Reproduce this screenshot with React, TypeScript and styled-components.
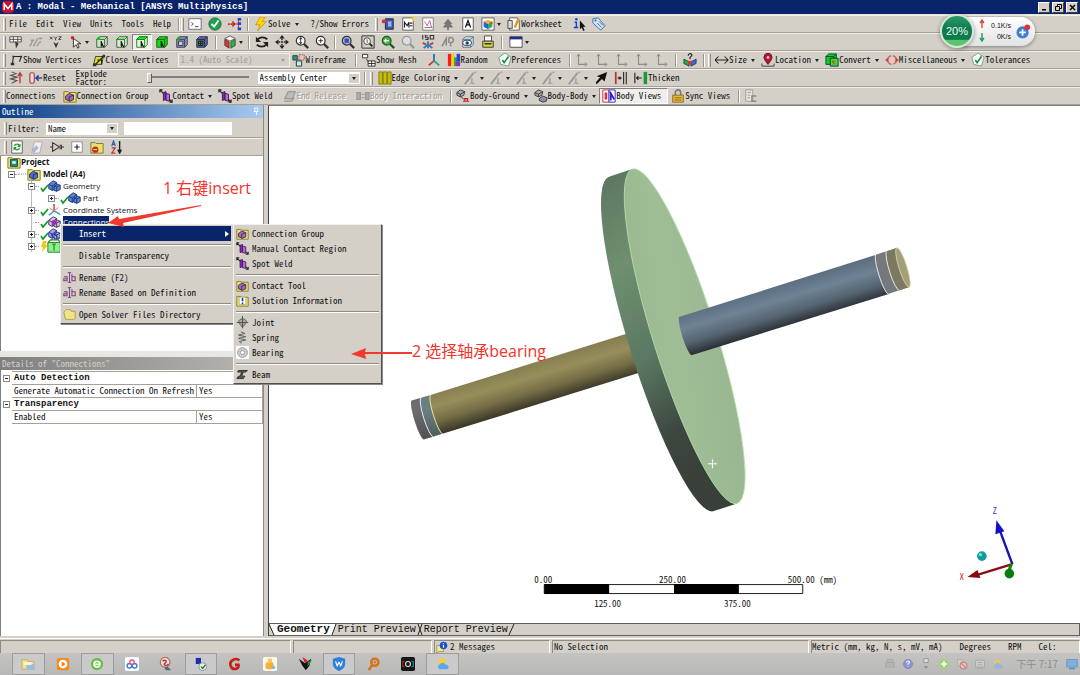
import React from "react";
import styled, { createGlobalStyle, css } from "styled-components";

const MONO = '"Noto Sans Mono CJK SC", "Liberation Mono", monospace';
const SANS = '"Open Sans", "Noto Sans", sans-serif';
const CJK = '"Open Sans", "Noto Sans CJK SC", sans-serif';
const FACE = "#d4d0c8";
const NAVY = "#0a246a";

const Global = createGlobalStyle`
  * { box-sizing: border-box; }
  body { margin: 0; background: ${FACE}; font: 9px/12px ${MONO}; color: #111; }
  button, input, select { font: inherit; color: inherit; margin: 0; border-radius: 0; }
`;

/* ---------- icons ---------- */

const Cube = ({ c, d, x = 2, y = 2 }: { c: string; d: string; x?: number; y?: number }) => (
  <g transform={`translate(${x} ${y})`} stroke={d} strokeWidth="1" strokeLinejoin="round">
    <path d="M0 3L3 0h9v9l-3 3H0z" fill={c} />
    <path d="M0 3h9v9M9 3l3-3" fill="none" />
  </g>
);
const Part = ({ c, d }: { c: string; d: string }) => (
  <g stroke={d} strokeWidth="1" strokeLinejoin="round">
    <path d="M2 6l5-4 4 2v6l-5 3-4-2z" fill={c} />
    <path d="M2 6l4 2v5M6 8l5-4" fill="none" />
    <path d="M8 8l4-2 3 1v5l-4 2-3-1z" fill={c} />
    <path d="M8 8l3 1v5M11 9l4-2" fill="none" />
  </g>
);
const Folder = () => <path d="M1 3h5l1 1h8v11H1z" fill="#ecdf6e" stroke="#7c7420" strokeWidth="1" />;
const Lens = ({ c = "#fff", s = "#333" }) => (
  <g>
    <path d="M10 10l5 5" stroke={s} strokeWidth="2.6" />
    <circle cx="6.5" cy="6.5" r="5" fill={c} stroke={s} strokeWidth="1.4" />
  </g>
);
const Tick = () => <path d="M5 8l2 3 5-7" fill="none" stroke="#17884a" strokeWidth="1.8" />;
const Page = ({ s = "#555" }) => <path d="M2 1h12v14H2z" fill="#fff" stroke={s} strokeWidth="1" />;

const ART: Record<string, React.ReactNode> = {
  ansys: <><rect width="16" height="16" rx="5" fill="#c8102e" /><path d="M3 12V4l5 6 5-6v8" fill="none" stroke="#fff" strokeWidth="2.2" /></>,
  cmd: <><rect x="1" y="2" width="14" height="12" fill="#fff" stroke="#667" /><path d="M4 6l2 2-2 2M8 11h4" stroke="#333" fill="none" /></>,
  ok: <><circle cx="8" cy="8" r="7" fill="#1fa04d" stroke="#0d6e33" /><path d="M4 8l3 3 5-7" stroke="#fff" strokeWidth="2.2" fill="none" /></>,
  link: <><path d="M0 8h2M3 8h2" stroke="#c22" strokeWidth="2" /><path d="M5 4l4 4-4 4z" fill="#c22" /><path d="M9 8h4M12 3v10" stroke="#c22" strokeWidth="1" /><path d="M11 1h4v3h-4zM11 6h4v3h-4zM11 12h4v3h-4z" fill="#24c" /></>,
  bolt: <path d="M7 0h6l-4 5h5L4 16l3-7H2z" fill="#ffd800" stroke="#c08a00" strokeWidth=".8" />,
  book: <><path d="M5 2h9v12H5z" fill="#3a55b8" stroke="#223" /><path d="M1 3h5v4H1z" fill="#c33" /><path d="M8 5h4v6H8z" fill="#9db2ee" /></>,
  note: <><Page /><path d="M4 12V6l3 4 2-4v6M10 7h3M10 10h3" stroke="#222" fill="none" strokeWidth="1.3" /><path d="M10 1l5-1v5z" fill="#f3d32b" /></>,
  chartpg: <><Page s="#777" /><path d="M4 5l3 5 3-6 2 8M4 12h9" stroke="#a4567a" fill="none" /></>,
  tree: <path d="M8 2l5 6h-2l3 4H9v3H7v-3H2l3-4H3z" fill="#777" />,
  letter: <><Page /><path d="M5 12l3-8 3 8M6 9h4" stroke="#111" fill="none" strokeWidth="1.4" /></>,
  rainbow: <><path d="M1 1h14v14H1z" fill="#fff" stroke="#555" /><path d="M3 5l5-2 5 2-5 3z" fill="#e8b81e" /><path d="M3 5v6l5 3V8z" fill="#2b5fe0" /><path d="M13 5v6l-5 3V8z" fill="#29b34a" /><path d="M9 7l4-2v3z" fill="#e33" /></>,
  sheet: <><path d="M3 1h9l2 3v11H3z" fill="#fff" stroke="#555" /><path d="M1 4h5v9H1z" fill="#d9d9d9" stroke="#444" /><path d="M13 2l-4 10" stroke="#d99a1c" strokeWidth="2.6" /></>,
  info: <><path d="M3 6h2v6M2 12h5" stroke="#14c" strokeWidth="1.6" fill="none" /><circle cx="5" cy="2.600" r="1.400" fill="#14c" /><path d="M9 4v10l2-2 2 4 1.500-1-2-4h3z" fill="#111" /></>,
  tag: <><path d="M1 2l6-1 8 9-5 5-9-8z" fill="#cfe3f5" stroke="#356a9a" /><circle cx="4" cy="4" r="1.2" fill="#356a9a" /><path d="M6 7l5 5M8 5l5 5" stroke="#356a9a" /></>,
  filter: <><path d="M1 2h13v6H1zM1 5h13M5 2v6M10 2v6" fill="#fff" stroke="#444" /><path d="M7 7l1 8 3-5z" fill="#333" /></>,
  bars: <path d="M1 13l3-6M5 13l5-9M9 13l3-5M2 6h4M11 4h4M12 8h2" stroke="#999" strokeWidth="1.600" />,
  xyz: <><path d="M1 2l3 3M4 2L1 5M6 2l1.500 2L9 2M7.500 4v2M11 2h3l-3 3h3" stroke="#333" fill="none" /><path d="M5 8l3 7 3-7-3 2z" fill="#333" /></>,
  pick: <><circle cx="4" cy="3" r="2" fill="#d22" /><path d="M5 4v10l3-3 2 4 1.600-1-2-4h4z" fill="#fff" stroke="#222" /></>,
  cubeV: <><Cube c="#d4e2cf" d="#285c28" /><circle cx="4" cy="4" r="2" fill="#1c1" /><path d="M7 7v6l2-1 1 2z" fill="#111" stroke="#111" /></>,
  cubeE: <><Cube c="#e4e6dd" d="#285c28" /><path d="M2 5h9" stroke="#0a0" strokeWidth="1.6" /><path d="M7 7v6l2-1 1 2z" fill="#111" stroke="#111" /></>,
  cubeF: <><Cube c="#e9f3e7" d="#0a7a0a" /><path d="M2 5l3-3h9l-3 3z" fill="#2e2" stroke="#0a7a0a" /><path d="M7 7v6l2-1 1 2z" fill="#111" stroke="#111" /></>,
  cubeB: <><Cube c="#1ed41e" d="#066006" /><path d="M7 7v6l2-1 1 2z" fill="#111" stroke="#111" /></>,
  cubeN: <><Cube c="#8d93b8" d="#2d3152" /><path d="M4 7h5v5H4z" fill="#c9cbe0" stroke="#333" /><circle cx="4" cy="4" r="2" fill="#2a2" /></>,
  cubeM: <><Cube c="#666c9c" d="#1b1f48" /><path d="M4 7h5v5H4zM6.500 7v5M4 9.500h5" fill="#2b2" stroke="#111" /></>,
  cubeR: <><path d="M8 1l6 3-6 3-6-3z" fill="#f4f4f4" stroke="#333" strokeWidth=".8" /><path d="M2 5v7l5 3V8z" fill="#d33" stroke="#333" strokeWidth=".8" /><path d="M14 5v7l-5 3V8z" fill="#2b3" stroke="#333" strokeWidth=".8" /></>,
  rotate: <><path d="M14 5C11 2 6 2 3 5M2 11c3 3 8 3 11 0" fill="none" stroke="#222" strokeWidth="2.200" /><path d="M1 2v6h6zM15 14V8H9z" fill="#222" /></>,
  pan: <><path d="M8 4v2M8 10v2M4 8h2M10 8h2M7 8h2" stroke="#222" strokeWidth="1.6" /><path d="M8 0l3 4H5zM8 16l3-4H5zM0 8l4-3v6zM16 8l-4-3v6z" fill="#222" /></>,
  zoom1: <><Lens /><path d="M6.500 3v7M5 5l1.500-2L8 5M5 8l1.500 2L8 8" stroke="#222" fill="none" /></>,
  zoom2: <><Lens /><path d="M6.500 4v5M4 6.500h5" stroke="#222" /></>,
  zoomFit: <><Lens c="#aab6e8" /><path d="M4 4h5v5H4z" fill="#3c4fae" /></>,
  zoomBox: <><path d="M1 1h14v14H1z" fill="none" stroke="#222" /><path d="M9 9l4 4" stroke="#222" strokeWidth="2" /><circle cx="7" cy="7" r="3.800" fill="#fff" stroke="#333" /><path d="M7 5v4" stroke="#444" /></>,
  zoomG: <><Lens c="#49b04a" s="#205c22" /><path d="M9 6.500H4M6 4.500l-2 2 2 2" stroke="#fff" fill="none" strokeWidth="1.4" /></>,
  zoomD: <Lens c="#ddd" s="#999" />,
  iso: <><path d="M2 0v5M5 5h3V2.500H5V0h3M10.500.500h4v4h-4z" stroke="#333" fill="none" strokeWidth="1.200" /><path d="M8 7v8M3 15l5-4 5 4" stroke="#1a7fbf" strokeWidth="2" fill="none" /><path d="M2 9l4 2M14 9l-4 2" stroke="#c33" strokeWidth="2" /></>,
  look: <path d="M1 13l5-9v8M9 3c6-1 7 5 2 6v4M9 3v6" stroke="#8a8a8a" strokeWidth="1.800" fill="none" />,
  eye: <><Cube c="#cfe0ec" d="#54708a" /><ellipse cx="7" cy="9" rx="5" ry="3" fill="#fff" stroke="#234" /><circle cx="7" cy="9" r="2" fill="#246" /></>,
  print: <><path d="M4 1h8v6H4z" fill="#fff" stroke="#444" /><path d="M2 7h12v7H2z" fill="#d8cf3c" stroke="#333" /><path d="M4 10h8" stroke="#333" strokeWidth="1.600" /></>,
  win: <><path d="M1 2h14v12H1z" fill="#fff" stroke="#444" /><path d="M1 2h14v3H1z" fill="#1b2f86" /></>,
  vert: <><path d="M4 12L5 4h9l-2 6" fill="none" stroke="#222" strokeWidth="1.200" /><path d="M2 11h4v3H2zM4 3h2v2H4zM13 3h2v2h-2z" fill="#333" /></>,
  closeV: <><path d="M4 4h9l-2 9H2z" fill="#e6dc2c" stroke="#333" /><path d="M3 14L13 4M6 8h5v5" stroke="#222" fill="none" strokeWidth="1.400" /><path d="M1 12h4v3H1zM12 2h3v3h-3z" fill="#333" /></>,
  wire: <><path d="M1 3h5v5H1z" fill="#16a085" stroke="#333" /><path d="M8 2h6v6H8z" fill="none" stroke="#b33" strokeDasharray="2 1" /><path d="M5 9h6v6H5z" fill="#b9f2f2" stroke="#222" /></>,
  mesh: <><path d="M.500 1.500h6v4h-6z" fill="#fff" stroke="#222" /><path d="M5 7l2 3M7 9h8v6H7zM7 12h8M11 9v6" fill="#fff" stroke="#222" /></>,
  triad: <g fill="none" strokeWidth="2"><path d="M8 9V1" stroke="#17a" /><path d="M8 9l-6 5" stroke="#d33" /><path d="M8 9l6 5" stroke="#2a8" /></g>,
  random: <><path d="M1 1h4v14H1z" fill="#e22" /><path d="M5 1h3v14H5z" fill="#f6d000" /><path d="M8 5h4v10H8z" fill="#22b14c" /><path d="M11 1h4v9h-4z" fill="#2244d8" /><path d="M10 10h5v5h-5z" fill="#8e2fc0" /></>,
  pref: <><path d="M8 0l7 5-3 10-9-2-2-8z" fill="#f4fbf6" stroke="#6d9a80" /><Tick /></>,
  axis: <><path d="M4 2v11h9" fill="none" stroke="#8d8d8d" strokeWidth="1.300" /><path d="M2 4l2-3 2 3M11 11l3 2-3 2" fill="none" stroke="#8d8d8d" /></>,
  help3d: <><path d="M1 7l6 3v5l-6-3z" fill="#1fae4c" stroke="#222" strokeWidth=".8" /><path d="M15 7l-6 3v5l6-3z" fill="#2b6fe0" stroke="#222" strokeWidth=".8" /><path d="M6 3c0-3 5-3 4 0L8 5v2" stroke="#222" strokeWidth="1.300" fill="none" /><path d="M6 9h4v4H6z" fill="#d33" /></>,
  size: <path d="M0 8h15M4 4L0 8l4 4M11 4l4 4-4 4" fill="none" stroke="#222" strokeWidth="1.200" />,
  loc: <><path d="M8 13C4 8 3 6 3.500 4a4.600 4.600 0 019 0C13 6 12 8 8 13z" fill="#b01838" stroke="#640a1e" /><circle cx="8" cy="5" r="1.600" fill="#f4b5c2" /><path d="M1 12v3h14v-3" fill="none" stroke="#333" /></>,
  convert: <><Cube c="#18c818" d="#044" x={1} y={1} /><path d="M6 6h9v9H6z" fill="#3be03b" stroke="#033" /><path d="M9 8v5M12 9l-3 2 3 2" stroke="#b52" strokeWidth="1.300" fill="none" /></>,
  misc: <><circle cx="8" cy="8" r="5" fill="none" stroke="#d66" strokeWidth="1.600" strokeDasharray="6 2" /><path d="M0 8l4-3v6zM16 8l-4-3v6z" fill="#c44" /></>,
  spring: <><path d="M3 1l5 2-6 2 7 2-7 2 7 2-6 3" fill="none" stroke="#555" strokeWidth="1.200" /><path d="M12.500 14V3M10 6l2.500-4L15 6" stroke="#b33" fill="none" strokeWidth="1.500" /></>,
  springG: <path d="M6 1l5 2-8 2 9 2-9 2 9 2-8 2 3 2" fill="none" stroke="#555" strokeWidth="1.100" />,
  reset: <><rect x="1" y="2" width="5" height="12" rx="2" fill="#f0dcdc" stroke="#a44" strokeWidth="1.400" /><path d="M15 8H8M11 5L8 8l3 3" stroke="#224a9a" fill="none" strokeWidth="1.800" /></>,
  yellow: <path d="M1 1h4v14H1zM6 1h4v14H6zM11 1h4v14h-4z" fill="#c9be00" stroke="#6d6800" strokeWidth=".8" />,
  edge: <><path d="M1 15L11 2" stroke="#999" strokeWidth="2" /><path d="M9 8v6M7 14h5M12 2l2-1" stroke="#999" strokeWidth="1.400" /></>,
  arrowB: <path d="M15 1l-3 11-3-3-6 6-1-2 5-6-4-1z" fill="#111" />,
  hbar: <><path d="M2 1v14" stroke="#b33" strokeWidth="2" /><path d="M11 1v14M14 1v14" stroke="#222" strokeWidth="1.200" /><path d="M4 8h5" stroke="#b33" strokeWidth="1.200" /><circle cx="6.500" cy="8" r="1.800" fill="#333" /></>,
  thick: <><path d="M1 2v12M3 8h6M5 6L3 8l2 2" stroke="#222" fill="none" strokeWidth="1.300" /><path d="M11 1h4v14h-4z" fill="#189a3c" /></>,
  group: <><Folder /><path d="M3 8l4-3 5 2v5l-4 2-5-2z" fill="#9d6aba" stroke="#3a2550" /><path d="M7 9l5-2M7 9v5" stroke="#3a2550" /></>,
  contact: <><path d="M5 4l3-1v9l-3 1z" fill="#7c2fa8" stroke="#41125e" /><path d="M8 5l4 1v8l-4-1z" fill="#b368d6" stroke="#41125e" /><path d="M1 1l4 4M1 4V1h3M15 15l-3-3M15 12v3h-3" stroke="#222" fill="none" strokeWidth="1.300" /></>,
  release: <path d="M2 11l4-8h8l-3 8zM1 14h9l3-4" fill="#bbb" stroke="#999" strokeWidth="1.300" />,
  inter: <path d="M1 4h4v8H1zM11 4h4v8h-4zM6 6h4M6 10h4" fill="#aaa" stroke="#999" strokeWidth="1.200" />,
  ground: <><path d="M1 4l4-3 5 2-1 4-4 2-4-2z" fill="#a9a9b4" stroke="#333" /><path d="M1 4l4 2 5-3M5 6v3" stroke="#333" fill="none" /><path d="M6 9l3 3" stroke="#222" /><path d="M8 14h7M9 11h5M10 11v3M13 11v3" stroke="#b22" strokeWidth="1.300" /></>,
  bodies: <><path d="M1 4l4-3 5 2-1 4-4 2-4-2z" fill="#a9a9b4" stroke="#333" /><path d="M1 4l4 2 5-3M5 6v3" stroke="#333" fill="none" /><path d="M6 11l4-3 5 2-1 4-4 1-4-2z" fill="#8b8fb0" stroke="#333" /></>,
  views: <><path d="M1 1h7v14H1z" fill="#fff" stroke="#c22" /><path d="M8 1h7v14H8z" fill="#fff" stroke="#22c" /><path d="M3 4h3v8H3z" fill="#d33" /><path d="M9 3l5 9M10 13V6" stroke="#22c" strokeWidth="2" /></>,
  lock: <><path d="M5 7V4a3 3 0 016 0v3" fill="none" stroke="#777" strokeWidth="1.800" /><rect x="2" y="7" width="12" height="8" fill="#e9b93a" stroke="#8a6410" /><path d="M4 10h8M4 12.500h8" stroke="#8a6410" /></>,
  copyC: <><path d="M2 1h8v13H2zM4 4h4M4 7h3M4 10h3" fill="#e6e4df" stroke="#999" /><path d="M14 8H9v6h5" stroke="#888" fill="none" strokeWidth="1.600" /></>,
  refresh: <><Page /><path d="M5 7c1-3 5-3 6 0M11 9c-1 3-5 3-6 0" stroke="#1a9a2c" strokeWidth="1.600" fill="none" /><path d="M12 4v4H8zM4 12V8h4z" fill="#1a9a2c" /></>,
  page2: <><path d="M2 15l3-13h9l-3 13z" fill="#eef0f4" stroke="#aaa" /><path d="M2 12l5-6 3 3-6 6z" fill="#a9b6cc" /></>,
  gate: <path d="M0 8h3M3 3v10l8-5zM11 8h5M11 6h2v4h-2" fill="none" stroke="#333" strokeWidth="1.200" />,
  plus: <><path d="M2 2h12v12H2z" fill="#fff" stroke="#888" /><path d="M8 5v6M5 8h6" stroke="#222" strokeWidth="1.300" /></>,
  folderR: <><Folder /><circle cx="6" cy="11" r="3.600" fill="#c4311c" /><path d="M4 11h4" stroke="#fff" /></>,
  az: <><path d="M2 7l2-6 2 6M3 5h3" fill="none" stroke="#235fb0" strokeWidth="1.300" /><path d="M2 9h4l-4 6h4" fill="none" stroke="#b33" strokeWidth="1.300" /><path d="M11 1v13M9 11l2 4 2-4" fill="none" stroke="#222" strokeWidth="1.600" /></>,
  project: <><Folder /><path d="M4 5h8v8H4z" fill="#1d8f7c" stroke="#0b4a40" /><path d="M6 7h4v3H6z" fill="#e8f6f3" /></>,
  model: <><Folder /><path d="M3 8l4-3 5 2v5l-4 2-5-2z" fill="#4b74c9" stroke="#152a5e" /><path d="M7 9l5-2M7 9v5" stroke="#152a5e" /></>,
  part: <Part c="#5a86d8" d="#14326e" />,
  csys: <g strokeWidth="1.600"><path d="M8 9V1" stroke="#d33" /><path d="M8 9l-6 5" stroke="#39c" /><path d="M8 9l7 4" stroke="#39c" /><path d="M3 6l5 3 5-4" stroke="#d66" fill="none" strokeWidth="1" /></g>,
  conn: <><Part c="#d6c4e4" d="#3a2550" /><path d="M6 6h5v5H6z" fill="#a02bb8" /></>,
  meshT: <><Part c="#a5a8ec" d="#22288a" /><path d="M4 7l4 5M9 9l5 4M4 11l6-5" stroke="#22288a" strokeWidth=".8" /></>,
  env: <><path d="M1 4h14v11H1z" fill="#8df08d" stroke="#1a7a1a" /><path d="M8 6v7M6 6h4M1 4l3-3h9l2 3" stroke="#1a7a1a" fill="none" strokeWidth="1.200" /></>,
  ab: <><path d="M1 7h4v5H1V9.500h4M11 4v8h4V7h-4" fill="none" stroke="#7b3f7f" strokeWidth="1.300" /><path d="M8 2v12M6 2h4M6 14h4" stroke="#7b3f7f" strokeWidth="1.200" /></>,
  folder: <path d="M1 5l3-3h5l1 2h5v9l-2 1H3z" fill="#f0e388" stroke="#a3983a" />,
  solinfo: <><Folder /><path d="M4 4h8v9H4z" fill="#fff" stroke="#884" strokeWidth=".6" /><path d="M8 5v4M8 10.500v2" stroke="#1330a8" strokeWidth="2" /></>,
  joint: <><path d="M3 8c0-6 10-6 10 0l-5 6z" fill="#aaa79f" stroke="#555" /><path d="M8 0v15M1 8h14" stroke="#555" strokeWidth="1.300" /></>,
  bearing: <><path d="M0 0h16v16H0z" fill="#fff" /><circle cx="8" cy="8" r="6" fill="#ddd" stroke="#888" /><circle cx="8" cy="8" r="2.600" fill="#fff" stroke="#888" /><circle cx="8" cy="8" r="4.400" fill="none" stroke="#999" strokeDasharray="1.500 2" /></>,
  beam: <path d="M3 3h11l-2 2H9l-2 5h4l-2 3H1l2-3h2l2-5H2z" fill="#555" stroke="#222" />,
  msg: <><path d="M1 6h9v8H4l-3 2z" fill="#f2e6a0" stroke="#998b3a" /><circle cx="10" cy="6" r="5" fill="#1c4fd0" /><path d="M10 5v4M10 2.600v1" stroke="#fff" strokeWidth="1.600" /></>,
  explorer: <><path d="M1 3h6l1 2h7v9H1z" fill="#f3dd8b" stroke="#bfa24a" strokeWidth=".8" /><path d="M6 8h9v6H6z" fill="#8cc4e8" /><path d="M3 6h9v3H3z" fill="#fff7d6" /></>,
  play: <><rect x="1" y="1" width="14" height="14" rx="2" fill="#f08c1c" /><circle cx="8" cy="8" r="5" fill="#fff" /><path d="M6.500 5v6l4.500-3z" fill="#e87a08" /></>,
  ie: <><circle cx="8" cy="8" r="7" fill="#5fc13c" /><path d="M4.500 8.500h7C11.500 4 5 4 4.500 8c0 4 5 4.500 6.800 2" fill="none" stroke="#fff" strokeWidth="1.900" /></>,
  cloud: <><rect x="0" y="0" width="16" height="16" rx="2" fill="#fff" /><g fill="none" strokeWidth="1.600"><circle cx="5" cy="10" r="2.600" stroke="#2f7fe6" /><circle cx="11" cy="10" r="2.600" stroke="#2f7fe6" /><circle cx="8" cy="6" r="2.600" stroke="#e2567a" /></g></>,
  swirl: <><circle cx="7" cy="6" r="5.500" fill="#e9e4e2" stroke="#c2675c" strokeWidth="1.400" /><path d="M4 5c3-3 6 0 3 2s1 4 4 1" fill="none" stroke="#b23a30" strokeWidth="1.600" /><path d="M6 12l4-1 4 4H8z" fill="#566a72" /></>,
  doc: <><path d="M2 1h6v7H2z" fill="#1c2fae" /><circle cx="10" cy="11" r="4.500" fill="#e4ecdc" stroke="#7f927a" /><path d="M8 11l2 2 3-4" fill="none" stroke="#256" strokeWidth="1.300" /></>,
  gred: <path d="M13 4C9 0 1 4 3 10s10 4 9-1H8" fill="none" stroke="#c81e14" strokeWidth="3" />,
  gift: <><rect x="0" y="0" width="16" height="16" rx="2" fill="#fdf8ea" /><rect x="3" y="6" width="9" height="8" rx="2" fill="#f4b038" /><circle cx="8" cy="4" r="2.500" fill="#f7c65c" /><circle cx="12" cy="12" r="2" fill="#6cbcf0" /></>,
  bird: <><path d="M1 2l7 5 7-5-2 8-4 5-4-5z" fill="#111" /><path d="M5 0l6 4-3 3z" fill="#e01818" /><path d="M11 6l5-3-5 8z" fill="#1a9a3a" /></>,
  shield: <><path d="M8 0l7 2v6c0 4-4 7-7 8-3-1-7-4-7-8V2z" fill="#2f7ddc" /><path d="M4 5l2 5 2-4 2 4 2-5" fill="none" stroke="#fff" strokeWidth="1.400" /></>,
  key: <><circle cx="9" cy="6" r="4" fill="none" stroke="#d8741a" strokeWidth="3" /><path d="M6 9l-4 6" stroke="#d8741a" strokeWidth="3" /><circle cx="9" cy="6" r="1.300" fill="#d8741a" /></>,
  cam: <><rect x="0" y="0" width="16" height="16" rx="2" fill="#151515" /><circle cx="8" cy="8" r="2.800" fill="none" stroke="#ddd" strokeWidth="1.300" /><path d="M4 5H2v6h2" stroke="#d33" fill="none" /><path d="M12 5h2v6h-2" stroke="#1bb" fill="none" /></>,
  weather: <><circle cx="7" cy="6" r="4.500" fill="#f7cf3a" /><path d="M4 14a3 3 0 010-5.500 4 4 0 017 0 3 3 0 012 5.500z" fill="#5aa9ee" /></>,
  tPrint: <path d="M4 2h8v4H4zM2 6h12v6H2z" fill="#b4b4b4" stroke="#a6a6a6" />,
  tHelp: <><circle cx="8" cy="8" r="6" fill="#8f95cf" stroke="#777cb8" /><path d="M6 6c0-3 5-2 4 0L8 8v1M8 11v1" stroke="#eef" strokeWidth="1.500" fill="none" /></>,
  tDots: <><path d="M5 1h6v5H5z" fill="#ddd" stroke="#888" /><path d="M5 11h6l-3 3z" fill="#888" /></>,
  tGreen: <><circle cx="8" cy="8" r="7" fill="#a9cf7c" /><path d="M8 4v8M4 8h8" stroke="#fff" strokeWidth="2" /></>,
  tNo: <><path d="M2 2h7v9H2z" fill="#ccc" stroke="#aaa" /><circle cx="10" cy="10" r="4.500" fill="#e6c4c4" stroke="#c98686" strokeWidth="1.500" /><path d="M7 7l6 6" stroke="#c98686" strokeWidth="1.500" /></>,
  tNet: <path d="M2 3h12v9H2zM5 6h6M5 9h6M4 14h8" fill="#ccc" stroke="#a2a2a2" />,
  tSun: <g opacity=".55"><circle cx="7" cy="6" r="4.500" fill="#f7cf3a" /><path d="M4 14a3 3 0 010-5.500 4 4 0 017 0 3 3 0 012 5.500z" fill="#7ab4e6" /></g>,
  tDesk: <><path d="M1 2h14v10H1z" fill="#7fb0dc" stroke="#5f8fbc" /><path d="M4 14h8" stroke="#5f8fbc" strokeWidth="2" /></>,
  pin: <path d="M4 2h7M5 2v6h5V2M3 8h9M8 8v6" fill="none" stroke="#fff" strokeWidth="1.600" />,
};

const Svg = styled.svg<{ $s: number }>`
  width: ${(p) => p.$s}px;
  height: ${(p) => p.$s}px;
  flex: none;
  display: block;
`;
const Icon = ({ n, s = 14 }: { n: string; s?: number }) => (
  <Svg $s={s} viewBox="0 0 16 16" aria-hidden="true">{ART[n]}</Svg>
);

/* ---------- title bar and toolbars ---------- */

const PageBox = styled.div`
  height: 100vh;
  min-height: 500px;
  display: flex;
  flex-direction: column;
  overflow: hidden;
  position: relative;
`;
const TitleBar = styled.header`
  height: 15px;
  flex: none;
  display: flex;
  align-items: center;
  gap: 2px;
  padding: 0 2px;
  background: ${NAVY};
  border-bottom: 1px solid #e6e3dd;
  color: #fff;
`;
const Title = styled.h1`
  margin: 0;
  flex: 1;
  font: bold 9px/13px "Liberation Mono", monospace;
  white-space: nowrap;
`;
const WinButton = styled.button`
  width: 12px;
  height: 11px;
  padding: 0;
  display: grid;
  place-items: center;
  background: ${FACE};
  border: 1px solid;
  border-color: #fff #404040 #404040 #fff;
`;
const Bar = styled.div`
  height: 18px;
  flex: none;
  display: flex;
  align-items: center;
  padding-left: 3px;
  white-space: nowrap;
  border-top: 1px solid #f2f0ec;
  border-bottom: 1px solid #a5a199;
`;
const Grip = styled.span<{ $l?: number; $r?: number }>`
  width: 3px;
  height: 13px;
  flex: none;
  margin-left: ${(p) => p.$l ?? 0}px;
  margin-right: ${(p) => p.$r ?? 3}px;
  border-left: 1px solid #fff;
  border-right: 1px solid #8d8a83;
`;
const Sep = styled.span<{ $m?: number }>`
  width: 2px;
  height: 13px;
  flex: none;
  margin: 0 ${(p) => p.$m ?? 2}px;
  border-left: 1px solid #9a968e;
  border-right: 1px solid #fff;
`;
const ToolButton = styled.button<{ $label: boolean; $menu: boolean; $on: boolean; $off: boolean }>`
  height: 16px;
  flex: none;
  display: flex;
  align-items: center;
  padding: 0 ${(p) => (p.$menu ? 2 : p.$label ? 6 : 2)}px 0 2px;
  border: 1px solid transparent;
  background: none;
  white-space: nowrap;
  ${(p) => p.$on && css`
    background: #efeeeb;
    border-color: #808080 #fff #fff #808080;
  `}
  ${(p) => p.$off && css`
    color: #a29f98;
    text-shadow: 1px 1px #fff;
  `}
`;
const Caret = styled.span<{ $gap: number }>`
  margin-left: ${(p) => p.$gap}px;
  border: 2px solid transparent;
  border-top: 3px solid #222;
  border-bottom: 0;
`;
type ToolProps = { i?: string; t?: string; menu?: boolean; on?: boolean; off?: boolean };
const Tool = ({ i, t, menu, on, off }: ToolProps) => (
  <ToolButton type="button" aria-label={t ?? i} disabled={off} $label={!!t} $menu={!!menu} $on={!!on} $off={!!off}>
    {i && <Icon n={i} />}
    {t}
    {menu && <Caret $gap={t ? 4 : 2} />}
  </ToolButton>
);
const Tools = ({ list }: { list: string[] }) => <>{list.map((n, k) => <Tool key={k} i={n} on={n === "cubeF"} />)}</>;

const MenuBar = styled.nav`
  display: flex;
  margin-right: 1px;
`;
const MenuTop = styled.button`
  padding: 0 5px 0 4px;
  border: 0;
  background: none;
`;
const SelectBox = styled.label<{ $w: number; $off?: boolean; $l?: number }>`
  width: ${(p) => p.$w}px;
  height: 12px;
  flex: none;
  margin-left: ${(p) => p.$l ?? 0}px;
  display: flex;
  align-items: center;
  position: relative;
  background: ${(p) => (p.$off ? FACE : "#fff")};
  outline: ${(p) => (p.$off ? "1px solid #f2f0ec" : "none")};
  color: ${(p) => (p.$off ? "#a29f98" : "#111")};
  select {
    appearance: none;
    width: 100%;
    height: 12px;
    padding: 0 0 0 2px;
    border: 0;
    background: none;
    opacity: 1;
  }
  &::after {
    content: "";
    position: absolute;
    right: 4px;
    border: 2px solid transparent;
    border-top: 3px solid ${(p) => (p.$off ? "#a29f98" : "#222")};
    border-bottom: 0;
    box-shadow: 0 0 0 3px ${(p) => (p.$off ? "transparent" : FACE)};
    background: ${(p) => (p.$off ? "none" : FACE)};
  }
`;
const Choice = ({ label, value, w, off, l }: { label: string; value: string; w: number; off?: boolean; l?: number }) => (
  <SelectBox $w={w} $off={off} $l={l}>
    <select aria-label={label} disabled={off} defaultValue={value}><option>{value}</option></select>
  </SelectBox>
);
const Explode = styled.label`
  width: 40px;
  margin-left: 3px;
  line-height: 8px;
  white-space: normal;
`;
const Slider = styled.input`
  appearance: none;
  width: 102px;
  height: 12px;
  margin: 0 9px 0 31px;
  background: linear-gradient(#808080, #808080) 0 4px / 100% 2px no-repeat;
  &::-webkit-slider-thumb {
    appearance: none;
    width: 5px;
    height: 10px;
    background: ${FACE};
    border: 1px solid;
    border-color: #fff #606060 #606060 #fff;
  }
`;
const Caption = styled.span<{ $l?: number }>`
  padding: 0 4px 0 ${(p) => p.$l ?? 2}px;
`;

/* ---------- network speed badge ---------- */

const Speed = styled.aside`
  position: absolute;
  top: 14px;
  right: 45px;
  width: 95px;
  height: 34px;
  display: flex;
  align-items: center;
`;
const Percent = styled.div`
  width: 34px;
  height: 34px;
  z-index: 1;
  display: grid;
  place-items: center;
  border-radius: 50%;
  border: 2px solid #cfe6d8;
  background: linear-gradient(#2b9a6a 0, #0f7a4c 45%, #0f7a4c 78%, #5cc46a 80%);
  box-shadow: 0 1px 4px #0006;
  color: #e9fff2;
  font: 11px/14px "Liberation Sans", sans-serif;
`;
const Rates = styled.div`
  flex: 1;
  height: 29px;
  margin-left: -14px;
  padding: 0 4px 0 18px;
  display: flex;
  align-items: center;
  justify-content: space-between;
  border-radius: 0 15px 15px 0;
  background: linear-gradient(#fff, #e2e2e4);
  box-shadow: 0 1px 4px #0006;
  font: 7px/11px "Liberation Sans", sans-serif;
  div { text-align: right; }
`;
const RateArrows = styled.svg`
  width: 8px;
  height: 24px;
`;

/* ---------- left panel ---------- */

const Work = styled.main`
  flex: 1;
  min-height: 0;
  display: flex;
  position: relative;
  padding-bottom: 2px;
  border-bottom: 1px solid #fff;
`;
const Side = styled.section`
  width: 264px;
  flex: none;
  display: flex;
  flex-direction: column;
  border-right: 1px solid #8d8a83;
  margin-right: 4px;
`;
const PaneTitle = styled.h2<{ $dim?: boolean }>`
  margin: 0;
  height: 13px;
  flex: none;
  display: flex;
  justify-content: space-between;
  align-items: center;
  padding: 0 2px;
  font: 9px/13px ${MONO};
  color: ${(p) => (p.$dim ? "#d4d0c8" : "#fff")};
  background: ${(p) => (p.$dim ? "linear-gradient(90deg,#808080,#b9b6b0)" : "linear-gradient(90deg,#0d3f86,#a6caf0)")};
`;
const FilterRow = styled.div`
  height: 20px;
  flex: none;
  display: flex;
  align-items: center;
  padding: 2px 0 0 4px;
  border-bottom: 1px solid #a5a199;
`;
const FilterLabel = styled.span`
  width: 38px;
  margin-left: 1px;
`;
const FilterInput = styled.input`
  width: 108px;
  height: 13px;
  margin-left: 6px;
  padding: 0 2px;
  border: 0;
  background: #fff;
`;
const TreeTools = styled(Bar)`
  padding-left: 4px;
`;
const Tree = styled.ul`
  margin: 0;
  padding: 0;
  height: 195px;
  flex: none;
  list-style: none;
  background: #fff;
  border-left: 1px solid #808080;
  font: 8px/12px ${SANS};
`;
const TreeRow = styled.li<{ $depth: number }>`
  height: 12px;
  display: flex;
  align-items: center;
  padding-left: ${(p) => (p.$depth ? p.$depth * 20 - 13 : 6)}px;
  background: ${(p) => (p.$depth > 1 ? "linear-gradient(#bbb,#bbb) 30px 0 / 1px 100% no-repeat" : "none")};
`;
const Expander = styled.span<{ $empty?: boolean }>`
  width: 7px;
  height: 7px;
  flex: none;
  background: ${(p) => (p.$empty ? "none" : "#fff")};
  border: ${(p) => (p.$empty ? "0" : "1px solid #888")};
`;
const Stem = styled.span`
  width: 4px;
  flex: none;
  border-top: 1px dotted #999;
`;
const Mark = styled.svg`
  width: 24px;
  height: 14px;
  flex: none;
`;
const NodeName = styled.span<{ $bold?: boolean; $sel?: boolean }>`
  font-weight: ${(p) => (p.$bold ? 700 : 400)};
  background: ${(p) => (p.$sel ? NAVY : "none")};
  color: ${(p) => (p.$sel ? "#fff" : "#111")};
`;
type Node = { d: number; i: string; t: string; x?: string; m?: string; bold?: boolean; sel?: boolean };
const NODES: Node[] = [
  { d: 1, i: "model", t: "Model (A4)", x: "-", bold: true },
  { d: 2, i: "part", t: "Geometry", x: "-", m: "#1a9a2c" },
  { d: 3, i: "part", t: "Part", x: "+", m: "#1a9a2c" },
  { d: 2, i: "csys", t: "Coordinate Systems", x: "+", m: "#1a9a2c" },
  { d: 2, i: "conn", t: "Connections", m: "#1a9a2c", sel: true },
  { d: 2, i: "meshT", t: "", x: "+", m: "#1a9a2c" },
  { d: 2, i: "env", t: "", x: "+", m: "bolt" },
];

const DetailsBox = styled.div`
  flex: 1;
  padding-top: 1px;
  background: #fff;
  border-left: 1px solid #808080;
`;
const Splitter = styled.div`
  height: 6px;
  flex: none;
  background: #e9e7e2;
`;
const DetailsTable = styled.table`
  width: 100%;
  border-collapse: collapse;
  table-layout: fixed;
  td, th {
    height: 13px;
    padding: 0 0 0 2px;
    border: 1px solid #a5a199;
    line-height: 12px;
    text-align: left;
    white-space: nowrap;
    font-weight: 400;
  }
  td:first-child { border-color: transparent; padding: 0 1px; }
  th[colspan] { font: bold 9px/12px "Liberation Mono", monospace; }
`;
const ColToggle = styled.col`
  width: 10px;
`;
const ColValue = styled.col`
  width: 66px;
`;

/* ---------- viewport ---------- */

const Stage = styled.section`
  flex: 1;
  min-width: 0;
  display: flex;
  flex-direction: column;
  border-left: 1px solid #404040;
  border-top: 1px solid #808080;
`;
const Canvas = styled.svg`
  flex: 1;
  min-height: 0;
  width: 100%;
  background: #fff;
  display: block;
`;
const ViewTabs = styled.div`
  height: 13px;
  flex: none;
  display: flex;
  border: 1px solid #606060;
  border-left: 0;
  font: 10px/12px "Liberation Mono", monospace;
`;
const ViewTab = styled.button<{ $on?: boolean }>`
  padding: 0;
  border: 0;
  background: ${(p) => (p.$on ? "#fff" : "none")};
  font-weight: ${(p) => (p.$on ? 700 : 400)};
  font-size: ${(p) => (p.$on ? 11 : 10)}px;
  line-height: 11px;
`;
const Slash = styled.svg`
  width: 8px;
  height: 11px;
  flex: none;
`;

/* ---------- context menus ---------- */

const Popup = styled.div<{ $x: number; $y: number; $w: number }>`
  position: absolute;
  left: ${(p) => p.$x}px;
  top: ${(p) => p.$y}px;
  width: ${(p) => p.$w}px;
  padding: 1px 2px;
  background: ${FACE};
  border: 1px solid;
  border-color: #f2f0ec #505050 #505050 #f2f0ec;
  box-shadow: 1px 1px #888;
`;
const PopItem = styled.button<{ $on?: boolean }>`
  width: 100%;
  height: 15px;
  display: flex;
  align-items: center;
  gap: 3px;
  padding: 0 2px 0 0;
  border: 0;
  white-space: nowrap;
  background: ${(p) => (p.$on ? NAVY : "none")};
  color: ${(p) => (p.$on ? "#fff" : "#111")};
`;
const PopIcon = styled.span`
  width: 13px;
  flex: none;
`;
const PopRule = styled.hr`
  height: 2px;
  margin: 3px 0 2px;
  border: 0;
  border-top: 1px solid #8d8a83;
  border-bottom: 1px solid #fff;
`;
const SubArrow = styled.span`
  margin-left: auto;
  border: 3px solid transparent;
  border-left: 4px solid #fff;
  border-right: 0;
`;
const Popups = () => (
  <>
    <Popup role="menu" $x={60} $y={119} $w={174}>
      <PopItem $on><PopIcon />Insert<SubArrow /></PopItem>
      <PopRule />
      <PopItem><PopIcon />Disable Transparency</PopItem>
      <PopRule />
      <PopItem><PopIcon><Icon n="ab" s={13} /></PopIcon>Rename (F2)</PopItem>
      <PopItem><PopIcon><Icon n="ab" s={13} /></PopIcon>Rename Based on Definition</PopItem>
      <PopRule />
      <PopItem><PopIcon><Icon n="folder" s={13} /></PopIcon>Open Solver Files Directory</PopItem>
    </Popup>
    <Popup role="menu" $x={233} $y={119} $w={149}>
      {[["group", "Connection Group"], ["contact", "Manual Contact Region"], ["contact", "Spot Weld"], null,
        ["group", "Contact Tool"], ["solinfo", "Solution Information"], null,
        ["joint", "Joint"], ["springG", "Spring"], ["bearing", "Bearing"], null, ["beam", "Beam"]].map((r, k) =>
        r ? <PopItem key={k}><PopIcon><Icon n={r[0]} s={13} /></PopIcon>{r[1]}</PopItem> : <PopRule key={k} />)}
    </Popup>
  </>
);

const Note = styled.p<{ $x: number; $y: number }>`
  position: absolute;
  left: ${(p) => p.$x}px;
  top: ${(p) => p.$y}px;
  margin: 0;
  font: 16px/20px ${CJK};
  color: #f2332b;
  white-space: nowrap;
  pointer-events: none;
`;
const Pointer = styled.svg<{ $x: number; $y: number }>`
  position: absolute;
  left: ${(p) => p.$x}px;
  top: ${(p) => p.$y}px;
  pointer-events: none;
`;

/* ---------- status bar and task bar ---------- */

const Status = styled.footer`
  height: 13px;
  flex: none;
  display: flex;
  gap: 2px;
  margin-top: 1px;
  white-space: nowrap;
`;
const Cell = styled.span<{ $w?: number }>`
  ${(p) => (p.$w ? `width: ${p.$w}px; flex: none;` : "flex: 1; min-width: 0;")}
  display: flex;
  align-items: center;
  gap: 2px;
  padding-left: 1px;
  overflow: hidden;
  border-left: 1px solid #8d8a83;
  border-top: 1px solid #8d8a83;
  border-right: 1px solid #fff;
`;
const Units = styled(Cell)`
  gap: 17px;
  padding-left: 0;
`;
const Taskbar = styled.nav`
  height: 22px;
  flex: none;
  display: flex;
  justify-content: space-between;
  align-items: center;
  padding: 0 2px 0 12px;
  background: linear-gradient(#c4c3c1, #b8b8b8);
`;
const Apps = styled.div`
  width: 447px;
  display: grid;
  grid-template-columns: repeat(13, 1fr);
  gap: 2px;
`;
const AppButton = styled.button<{ $open: boolean }>`
  height: 22px;
  padding: 0;
  display: grid;
  place-items: center;
  background: ${(p) => (p.$open ? "#cacaca" : "none")};
  border: 1px solid ${(p) => (p.$open ? "#9c9c9c" : "transparent")};
`;
const Tray = styled.div`
  display: flex;
  align-items: center;
  gap: 6px;
  color: #8f8f8f;
  font: 10px/14px "Noto Sans CJK SC", sans-serif;
`;
const Clock = styled.time`
  margin: 0 2px 0 6px;
`;

const APPS: [string, boolean][] = [
  ["explorer", true], ["play", false], ["ie", true], ["cloud", false], ["swirl", false], ["doc", true], ["gred", false],
  ["gift", false], ["bird", false], ["shield", true], ["key", false], ["cam", false], ["weather", true],
];

/* ---------- 3D scene ---------- */

const Scene = () => (
  <Canvas viewBox="269 106 811 518" preserveAspectRatio="xMidYMid meet" role="img" aria-label="Rotor model">
    <defs>
      <linearGradient id="olive" gradientUnits="userSpaceOnUse" x1="520" y1="366" x2="532" y2="406">
        <stop offset="0" stopColor="#857d50" /><stop offset=".35" stopColor="#978e5c" />
        <stop offset=".7" stopColor="#746c45" /><stop offset="1" stopColor="#3d3a2a" />
      </linearGradient>
      <linearGradient id="steel" gradientUnits="userSpaceOnUse" x1="780" y1="285" x2="792" y2="325">
        <stop offset="0" stopColor="#5c6e80" /><stop offset=".35" stopColor="#6f8394" />
        <stop offset=".7" stopColor="#566472" /><stop offset="1" stopColor="#2c3036" />
      </linearGradient>
      <linearGradient id="shade" gradientUnits="userSpaceOnUse" x1="520" y1="366" x2="532" y2="406">
        <stop offset=".35" stopColor="#000" stopOpacity="0" /><stop offset="1" stopColor="#000" stopOpacity=".4" />
      </linearGradient>
      <linearGradient id="rim" x1="0" y1="0" x2=".3" y2="1">
        <stop offset="0" stopColor="#5b7560" /><stop offset=".3" stopColor="#6f8f70" />
        <stop offset=".6" stopColor="#5a7862" /><stop offset=".85" stopColor="#3d4840" /><stop offset="1" stopColor="#394039" />
      </linearGradient>
      <linearGradient id="face" x1="0" y1="0" x2="1" y2="1">
        <stop offset="0" stopColor="#98b78e" /><stop offset=".4" stopColor="#9fbe96" /><stop offset="1" stopColor="#97b590" />
      </linearGradient>
    </defs>

    <path d="M430 395.500L640 330v43L442 434.500A3.700 20.600 -17.400 0 1 430 395.500z" fill="url(#olive)" />
    <path d="M420.500 398.300l9.500-2.800A3.700 20.600 -17.400 0 0 442 434.500l-9.500 3A3.700 20.600 -17.400 0 1 420.500 398.300z" fill="#6b7f81" />
    <path d="M411 401l9.500-2.700A3.700 20.600 -17.400 0 0 432.500 437.500L423.700 440A3.700 20.600 -17.400 0 1 411 401z" fill="#6c6c70" />
    <path d="M411 401l19-5.500A3.700 20.600 -17.400 0 0 442 434.500l-18 5.500A3.700 20.600 -17.400 0 1 411 401z" fill="url(#shade)" opacity=".6" />
    <path d="M420.500 398.300A3.700 20.600 -17.400 0 0 432.500 437.500" fill="none" stroke="#e4ecee" />
    <path d="M430 395.500A3.700 20.600 -17.400 0 0 442 434.500" fill="none" stroke="#e6e0a0" />

    <path d="M632.200 169.200L608.900 176.900A31.600 175.500 -17.400 0 0 713.900 511.900L737.200 504.200z" fill="url(#rim)" />
    <ellipse cx="684.700" cy="336.700" rx="31.600" ry="175.500" transform="rotate(-17.400 684.700 336.700)" fill="url(#face)" stroke="#b4e0ac" strokeWidth=".8" />

    <path d="M679 317.500L876.500 255 890 294 691.500 355.700A3.700 20.600 -17.400 0 1 679 317.500z" fill="url(#steel)" />
    <path d="M876 255l21-6.700 12.800 39L890 293.800A3.700 20.600 -17.400 0 1 876 255z" fill="#77777f" />
    <path d="M886.800 251.700l10.200-3.400 12.800 39-10.300 3.200A3.700 20.600 -17.400 0 1 886.800 251.700z" fill="#7c7960" />
    <path d="M876 255A3.700 20.600 -17.400 0 0 890 293.800M886.800 251.700A3.700 20.600 -17.400 0 0 899.500 290.500" fill="none" stroke="#e8e8dc" />
    <ellipse cx="903.400" cy="267.800" rx="4" ry="20.600" transform="rotate(-17.400 903.400 267.800)" fill="#a39f7c" stroke="#d8d4a4" strokeWidth=".8" />
    <path d="M708 464.500h9M712.500 460v9" stroke="#fff" />

    <path d="M544 585.500h259v9H544z" fill="#fff" stroke="#222" />
    <path d="M544 585h65v10h-65zM674 585h65v10h-65z" fill="#000" />
    <g fontFamily={MONO} fontSize="9" fill="#111">
      <text x="534" y="584">0.00</text><text x="659" y="584">250.00</text><text x="788" y="584">500.00 (mm)</text>
      <text x="594" y="608">125.00</text><text x="724" y="608">375.00</text>
      <text x="993" y="515" fill="#4444e0">Z</text><text x="960" y="581" fill="#e03030">X</text>
    </g>
    <path d="M1013 565L1000 530" stroke="#1515b0" strokeWidth="2.400" />
    <path d="M997 521l8 11-9 3z" fill="#1010c8" />
    <path d="M1013 565l-36 11" stroke="#8a1010" strokeWidth="2.400" />
    <path d="M968 578l10-7 3 8z" fill="#8a0808" />
    <path d="M1012 565l-3 8" stroke="#0b8a0b" strokeWidth="3" />
    <circle cx="1010" cy="574.500" r="4.800" fill="#0a7c0a" />
    <circle cx="982.500" cy="557" r="4.800" fill="#149c9c" /><circle cx="981" cy="555.500" r="1.600" fill="#6fe0e0" />
  </Canvas>
);

const Minus = () => (
  <Expander as="div"><Svg $s={5} viewBox="0 0 5 5"><path d="M1 2.500h3" stroke="#222" /></Svg></Expander>
);

export default function App() {
  return (
    <PageBox>
      <Global />
      <TitleBar>
        <Icon n="ansys" s={12} />
        <Title>A : Modal - Mechanical [ANSYS Multiphysics]</Title>
        <WinButton aria-label="Minimize"><Svg $s={7} viewBox="0 0 7 7"><path d="M1 5h4v1.500H1z" /></Svg></WinButton>
        <WinButton aria-label="Restore"><Svg $s={7} viewBox="0 0 7 7"><path d="M2.500 2V.5h4v4H5M.5 2.500h4v4h-4z" fill="none" stroke="#000" /></Svg></WinButton>
        <WinButton aria-label="Close"><Svg $s={7} viewBox="0 0 7 7"><path d="M1 1l5 5M6 1L1 6" stroke="#000" strokeWidth="1.400" /></Svg></WinButton>
      </TitleBar>

      <Bar>
        <Grip $r={-1} />
        <MenuBar>{["File", "Edit", "View", "Units", "Tools", "Help"].map((m) => <MenuTop key={m}>{m}</MenuTop>)}</MenuBar>
        <Sep $m={1} /><Grip $r={1} />
        <Tools list={["cmd", "ok", "link"]} /><Sep />
        <Tool i="bolt" t="Solve" menu /><Caption $l={9}>?/Show Errors</Caption>
        <Grip $l={2} $r={0} />
        <Tools list={["book", "note", "chartpg", "tree", "letter"]} /><Tool i="rainbow" menu />
        <Tool i="sheet" t="Worksheet" /><Tools list={["info", "tag"]} />
      </Bar>

      <Bar>
        <Grip $r={0} />
        <Tools list={["filter", "bars", "xyz"]} /><Tool i="pick" menu />
        <Tools list={["cubeV", "cubeE", "cubeF", "cubeB", "cubeN", "cubeM"]} /><Sep $m={3} />
        <Tool i="cubeR" menu /><Sep />
        <Tools list={["rotate", "pan", "zoom1", "zoom2"]} /><Sep />
        <Tools list={["zoomFit", "zoomBox", "zoomG", "zoomD", "iso", "look", "eye", "print"]} /><Sep $m={3} />
        <Tool i="win" menu />
      </Bar>

      <Bar>
        <Grip $r={0} />
        <Tool i="vert" t="Show Vertices" /><Tool i="closeV" t="Close Vertices" />
        <Choice label="Scale" value="1.4 (Auto Scale)" w={110} off l={3} />
        <Tool i="wire" t="Wireframe" /><Sep />
        <Tool i="mesh" t="Show Mesh" /><Tool i="triad" /><Tool i="random" t="Random" /><Tool i="pref" t="Preferences" /><Sep $m={1} />
        <Tools list={["axis", "axis", "axis", "axis", "axis"]} /><Sep $m={3} /><Tool i="help3d" />
        <Sep $m={3} /><Grip $r={1} />
        <Tool i="size" t="Size" menu /><Tool i="loc" t="Location" menu /><Tool i="convert" t="Convert" menu />
        <Tool i="misc" t="Miscellaneous" menu /><Tool i="pref" t="Tolerances" />
      </Bar>

      <Bar>
        <Grip $r={0} />
        <Tool i="spring" /><Tool i="reset" t="Reset" />
        <Explode htmlFor="explode">Explode Factor:</Explode>
        <Slider id="explode" type="range" defaultValue={0} />
        <Choice label="Explode center" value="Assembly Center" w={102} />
        <Sep $m={4} /><Grip $r={2} />
        <Tool i="yellow" t="Edge Coloring" menu />
        {[0, 1, 2, 3, 4].map((k) => <Tool key={k} i="edge" menu />)}
        <Tools list={["arrowB", "hbar"]} /><Tool i="thick" t="Thicken" />
      </Bar>

      <Bar>
        <Grip $r={-2} />
        <Caption>Connections</Caption>
        <Tool i="group" t="Connection Group" /><Tool i="contact" t="Contact" menu /><Tool i="contact" t="Spot Weld" />
        <Tool i="release" t="End Release" off /><Tool i="inter" t="Body Interaction" off /><Sep $m={1} />
        <Tool i="ground" t="Body-Ground" menu /><Tool i="bodies" t="Body-Body" menu />
        <Tool i="views" t="Body Views" on /><Tool i="lock" t="Sync Views" /><Sep $m={1} /><Tool i="copyC" />
      </Bar>

      <Work>
        <Side>
          <PaneTitle>Outline<Icon n="pin" s={9} /></PaneTitle>
          <FilterRow>
            <Grip $r={0} /><FilterLabel>Filter:</FilterLabel>
            <Choice label="Filter by" value="Name" w={72} />
            <FilterInput aria-label="Filter text" />
          </FilterRow>
          <TreeTools><Grip $r={0} /><Tools list={["refresh", "page2", "gate", "plus", "folderR", "az"]} /></TreeTools>
          <Tree>
            <TreeRow $depth={0}><Icon n="project" /><NodeName $bold>Project</NodeName></TreeRow>
            {NODES.map((n, k) => (
              <TreeRow key={k} $depth={n.d}>
                <Expander $empty={!n.x}>{n.x && (
                  <Svg $s={5} viewBox="0 0 5 5"><path d={n.x === "+" ? "M1 2.500h3M2.500 1v3" : "M1 2.500h3"} stroke="#222" /></Svg>
                )}</Expander>
                <Stem />
                <Mark viewBox="0 0 24 14">
                  {n.m === "bolt" ? <path d="M4 2h4L6 6h3l-6 7 1-5H2z" fill="#f4c800" /> : n.m
                    ? <path d="M2 9l2 3 5-6" fill="none" stroke={n.m} strokeWidth="1.800" />
                    : <path d="M0 7h7" stroke="#999" strokeDasharray="1 1" />}
                  <g transform="translate(8 0) scale(.88)">{ART[n.i]}</g>
                </Mark>
                <NodeName $bold={n.bold} $sel={n.sel}>{n.t}</NodeName>
              </TreeRow>
            ))}
          </Tree>
          <Splitter />
          <PaneTitle $dim>Details of "Connections"</PaneTitle>
          <DetailsBox>
            <DetailsTable>
              <colgroup><ColToggle /><col /><ColValue /></colgroup>
              <tbody>
                <tr><td><Minus /></td><th colSpan={2}>Auto Detection</th></tr>
                <tr><td /><th scope="row">Generate Automatic Connection On Refresh</th><td>Yes</td></tr>
                <tr><td><Minus /></td><th colSpan={2}>Transparency</th></tr>
                <tr><td /><th scope="row">Enabled</th><td>Yes</td></tr>
              </tbody>
            </DetailsTable>
          </DetailsBox>
        </Side>

        <Stage>
          <Scene />
          <ViewTabs>
            <Slash viewBox="0 0 8 11"><path d="M0 0h8v11H5z" fill="#fff" /><path d="M0 0l5 11" stroke="#222" /></Slash>
            <ViewTab $on>Geometry</ViewTab>
            <Slash viewBox="0 0 8 11"><path d="M0 0h6L2 11H0z" fill="#fff" /><path d="M6 0L2 11" stroke="#222" /></Slash>
            <ViewTab>Print Preview</ViewTab>
            <Slash viewBox="0 0 8 11"><path d="M2 0l4 11M6 0L2 11" stroke="#222" /></Slash>
            <ViewTab>Report Preview</ViewTab>
            <Slash viewBox="0 0 8 11"><path d="M6 0L1 11" stroke="#222" /></Slash>
          </ViewTabs>
        </Stage>

        <Popups />
        <Pointer $x={107} $y={98} width="96" height="26"><path d="M1 20l10-7 1 3L94 2v1L16 20l1 4z" fill="#f23a2c" /></Pointer>
        <Note $x={163} $y={73}>1 右键insert</Note>
        <Pointer $x={351} $y={242} width="64" height="14"><path d="M0 7l15-6-1 4 47 0v2H14l1 5z" fill="#f23a2c" /></Pointer>
        <Note $x={412} $y={236}>2 选择轴承bearing</Note>
      </Work>

      <Status>
        <Cell $w={291} /><Cell $w={139} />
        <Cell $w={116}><Icon n="msg" s={12} />2 Messages</Cell>
        <Cell $w={257}>No Selection</Cell>
        <Units><span>Metric (mm, kg, N, s, mV, mA)</span><span>Degrees</span><span>RPM</span><span>Cel:</span></Units>
      </Status>

      <Taskbar>
        <Apps>{APPS.map(([n, open]) => <AppButton key={n} aria-label={n} $open={open}><Icon n={n} /></AppButton>)}</Apps>
        <Tray>
          {["tPrint", "tHelp", "tDots", "tGreen", "tNo", "tNet", "tSun"].map((n) => <Icon key={n} n={n} s={12} />)}
          <Clock>下午 7:17</Clock>
          <Icon n="tDesk" s={12} />
        </Tray>
      </Taskbar>

      <Speed>
        <Percent>20%</Percent>
        <Rates>
          <RateArrows viewBox="0 0 8 24">
            <path d="M4 9V2M2 4l2-3 2 3" stroke="#e0483c" strokeWidth="1.400" fill="none" />
            <path d="M4 14v7M2 19l2 3 2-3" stroke="#2f9a58" strokeWidth="1.400" fill="none" />
          </RateArrows>
          <div>0.1K/s<br />0K/s</div>
          <Svg $s={15} viewBox="0 0 16 16"><circle cx="7" cy="9" r="6.500" fill="#3c7fd0" /><path d="M7 5.500v7M3.500 9h7" stroke="#fff" strokeWidth="1.800" /><circle cx="12" cy="3.500" r="3" fill="#e5323a" /></Svg>
        </Rates>
      </Speed>
    </PageBox>
  );
}
